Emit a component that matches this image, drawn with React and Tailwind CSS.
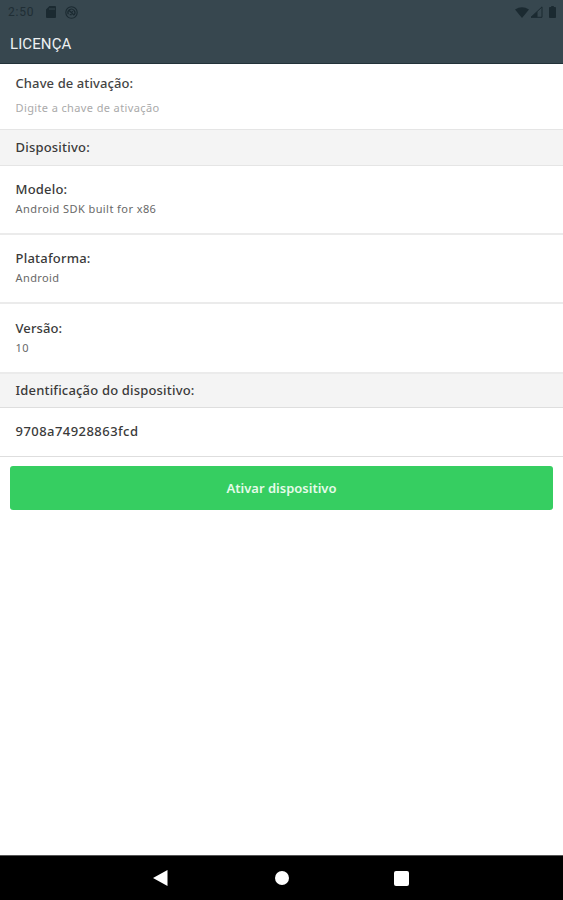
const sans = "font-['Noto_Sans',sans-serif]";

function Detail({ label, value, labelClass, valueClass, className }) {
  return (
    <div className={`shrink-0 border-b-2 border-[#ebebeb] px-[15.5px] ${className}`}>
      <div className={`text-[13px] leading-5 font-medium text-[#3a3a3a] ${labelClass}`}>{label}</div>
      <div className={`text-[11px] leading-5 text-[#686868] ${valueClass}`}>{value}</div>
    </div>
  );
}

function StatusBar() {
  return (
    <div className="flex h-6 items-center pl-[8px] pr-[7px] text-[#1b2a31]">
      <span className="w-[38px] font-[Roboto,sans-serif] text-[12px] leading-6 tracking-[0.8px] text-[#202e35]">2:50</span>
      <svg width="10" height="12" viewBox="0 0 10 12" fill="currentColor">
        <path fillRule="evenodd" d="M3.5 0H9q1 0 1 1v10q0 1-1 1H1q-1 0-1-1V3.5ZM3.5 2v2h1V2Zm2 0v2h1V2Zm2 0v2h1V2Z" />
      </svg>
      <svg className="ml-[9px]" width="13" height="13" viewBox="0 0 13 13" fill="none" stroke="currentColor">
        <circle cx="6.5" cy="6.5" r="5.7" strokeWidth="1.1" />
        <path d="M3.3 8.200a3.500 3.500 0 1 1 5.800.7M3.600 4l5.600 5.200M4.700 8.700h2" strokeWidth="1.2" />
        <circle cx="7.300" cy="5.700" r=".8" fill="currentColor" stroke="none" />
      </svg>
      <svg className="ml-auto" width="14" height="11" viewBox="0 0 14 11" fill="currentColor">
        <path d="M0 2.5Q7-2 14 2.5L7 11Z" />
      </svg>
      <svg className="ml-[1px]" width="13" height="12" viewBox="0 0 13 12" fill="none" stroke="currentColor">
        <path d="M1 11.3 12 .9v10.4Z" />
        <path d="M1 11.3 7.500 5.200v6.100Z" fill="currentColor" stroke="none" />
      </svg>
      <svg className="ml-[6px]" width="7" height="12" viewBox="0 0 8 12" preserveAspectRatio="none" fill="currentColor">
        <path d="M2.5 0h3v1H7q1 0 1 1v9q0 1-1 1H1q-1 0-1-1V2q0-1 1-1h1.500Z" />
      </svg>
    </div>
  );
}

export default function App() {
  return (
    <div className={`flex h-[900px] w-[563px] flex-col overflow-hidden bg-white ${sans}`}>
      <header className="h-16 shrink-0 border-b border-[#223239] bg-[#37474f]">
        <StatusBar />
        <h1 className="pl-[10px] font-[Roboto,sans-serif] text-[15px] leading-10 tracking-[0.1px] text-[#edf1f3]">LICENÇA</h1>
      </header>

      <section className="h-[65px] shrink-0 px-[15.5px] pt-[9px]">
        <label htmlFor="key" className="block text-[13px] leading-5 font-medium tracking-[0.1px] text-[#444]">Chave de ativação:</label>
        <input id="key" placeholder="Digite a chave de ativação" className="mt-[5px] block h-5 w-full text-[11px] leading-5 tracking-[0.38px] outline-none placeholder:text-[#aaa]" />
      </section>

      <h2 className="h-[37px] shrink-0 border-y border-[#e5e5e5] bg-[#f4f4f4] px-[15.5px] text-[13px] leading-[34px] font-medium tracking-[0.2px] text-[#3a3a3a]">Dispositivo:</h2>
      <Detail className="h-[69px] pt-[13px]" label="Modelo:" labelClass="tracking-[0.2px]" value="Android SDK built for x86" valueClass="tracking-[0.43px]" />
      <Detail className="h-[69px] pt-[13px]" label="Plataforma:" labelClass="tracking-[0.22px]" value="Android" valueClass="tracking-[0.4px]" />
      <Detail className="h-[70px] pt-[14px]" label="Versão:" labelClass="tracking-[0.1px]" value="10" valueClass="tracking-[0.5px]" />
      <h2 className="h-[34px] shrink-0 border-b border-[#dedede] bg-[#f4f4f4] px-[15.5px] text-[13px] leading-[32px] font-medium tracking-[0.18px] text-[#3a3a3a]">Identificação do dispositivo:</h2>
      <div className="h-[49px] shrink-0 border-b border-[#dedede] px-[15.5px] text-[13px] leading-[47px] font-medium tracking-[0.45px] text-[#3a3a3a]">9708a74928863fcd</div>

      <button className="mx-[10px] mt-[9px] h-11 shrink-0 rounded-[3px] bg-[#36ce61] pt-px text-[13px] font-semibold text-[#e6fbea]">Ativar dispositivo</button>

      <nav className="mt-auto flex h-[45px] shrink-0 items-center border-t border-[#555] bg-black pl-[153px] text-white">
        <svg width="15" height="16" viewBox="0 0 15 16" fill="currentColor"><path d="M0 8 14.500 0v16Z" /></svg>
        <span className="ml-[107px] h-[14px] w-[14px] rounded-full bg-white" />
        <span className="ml-[105px] h-[15px] w-[15px] rounded-[2px] bg-white" />
      </nav>
    </div>
  );
}
